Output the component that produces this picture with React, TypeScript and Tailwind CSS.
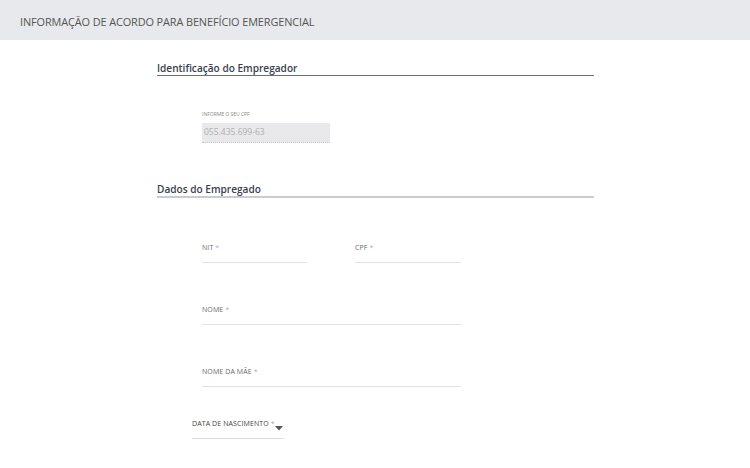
const font = { fontFamily: '"Open Sans", "Noto Sans", sans-serif' }

function Field({ label, width }: { label: string; width: string }) {
  return (
    <div className={`${width} flex flex-col`}>
      <span className="text-[7px] leading-[10px] text-[#6a6a6a] tracking-[0.1px]">
        {label} <span className="text-[#b0b0b0]">*</span>
      </span>
      <div className="mt-[9px] h-px bg-[#e2e2e2]" />
    </div>
  )
}

function SectionTitle({ title, light }: { title: string; light?: boolean }) {
  return (
    <div
      className={`w-[437px] text-[10.1px] leading-[13px] font-semibold text-[#37414f] border-b ${
        light ? 'border-b-2 border-[#c9cbcf]' : 'border-[#6b6e73]'
      }`}
    >
      {title}
    </div>
  )
}

export default function App() {
  return (
    <div className="w-[750px] h-[468px] bg-white overflow-hidden" style={font}>
      <div className="h-[40px] bg-[#e8e9ec] flex items-center pl-[20px] pt-[4px]">
        <h1 className="text-[10.9px] text-[#555] tracking-[-0.1px]">
          INFORMAÇÃO DE ACORDO PARA BENEFÍCIO EMERGENCIAL
        </h1>
      </div>

      <div className="pl-[157px] pt-[22px]">
        <SectionTitle title="Identificação do Empregador" />

        <div className="pl-[45px] mt-[35px]">
          <div className="text-[5px] leading-[6px] text-[#888]">INFORME O SEU CPF</div>
          <div className="mt-[6px] w-[128px] h-[20px] bg-[#e9e9eb] border-b border-dotted border-[#c8c8c8] flex items-center pl-[2px] text-[8.5px] text-[#b0b0b0]">
            055.435.699-63
          </div>
        </div>

        <div className="mt-[40px]">
          <SectionTitle title="Dados do Empregado" light />
        </div>

        <div className="pl-[45px] mt-[45px] flex gap-[48px]">
          <Field label="NIT" width="w-[105px]" />
          <Field label="CPF" width="w-[106px]" />
        </div>

        <div className="pl-[45px] mt-[42px]">
          <Field label="NOME" width="w-[259px]" />
        </div>

        <div className="pl-[45px] mt-[42px]">
          <Field label="NOME DA MÃE" width="w-[259px]" />
        </div>

        <div className="pl-[35px] mt-[32px] w-[127px]">
          <div className="flex items-end justify-between">
            <span className="text-[7px] leading-[10px] text-[#444] tracking-[0.1px]">
              DATA DE NASCIMENTO <span className="text-[#aaa]">*</span>
            </span>
            <svg width="8" height="5" viewBox="0 0 8 5" className="mb-[-2px] mr-[1px]">
              <path d="M0 0h8L4 4.5z" fill="#555" />
            </svg>
          </div>
          <div className="mt-[9px] w-[92px] h-[1px] bg-[#dcdcdc]" />
        </div>
      </div>
    </div>
  )
}
